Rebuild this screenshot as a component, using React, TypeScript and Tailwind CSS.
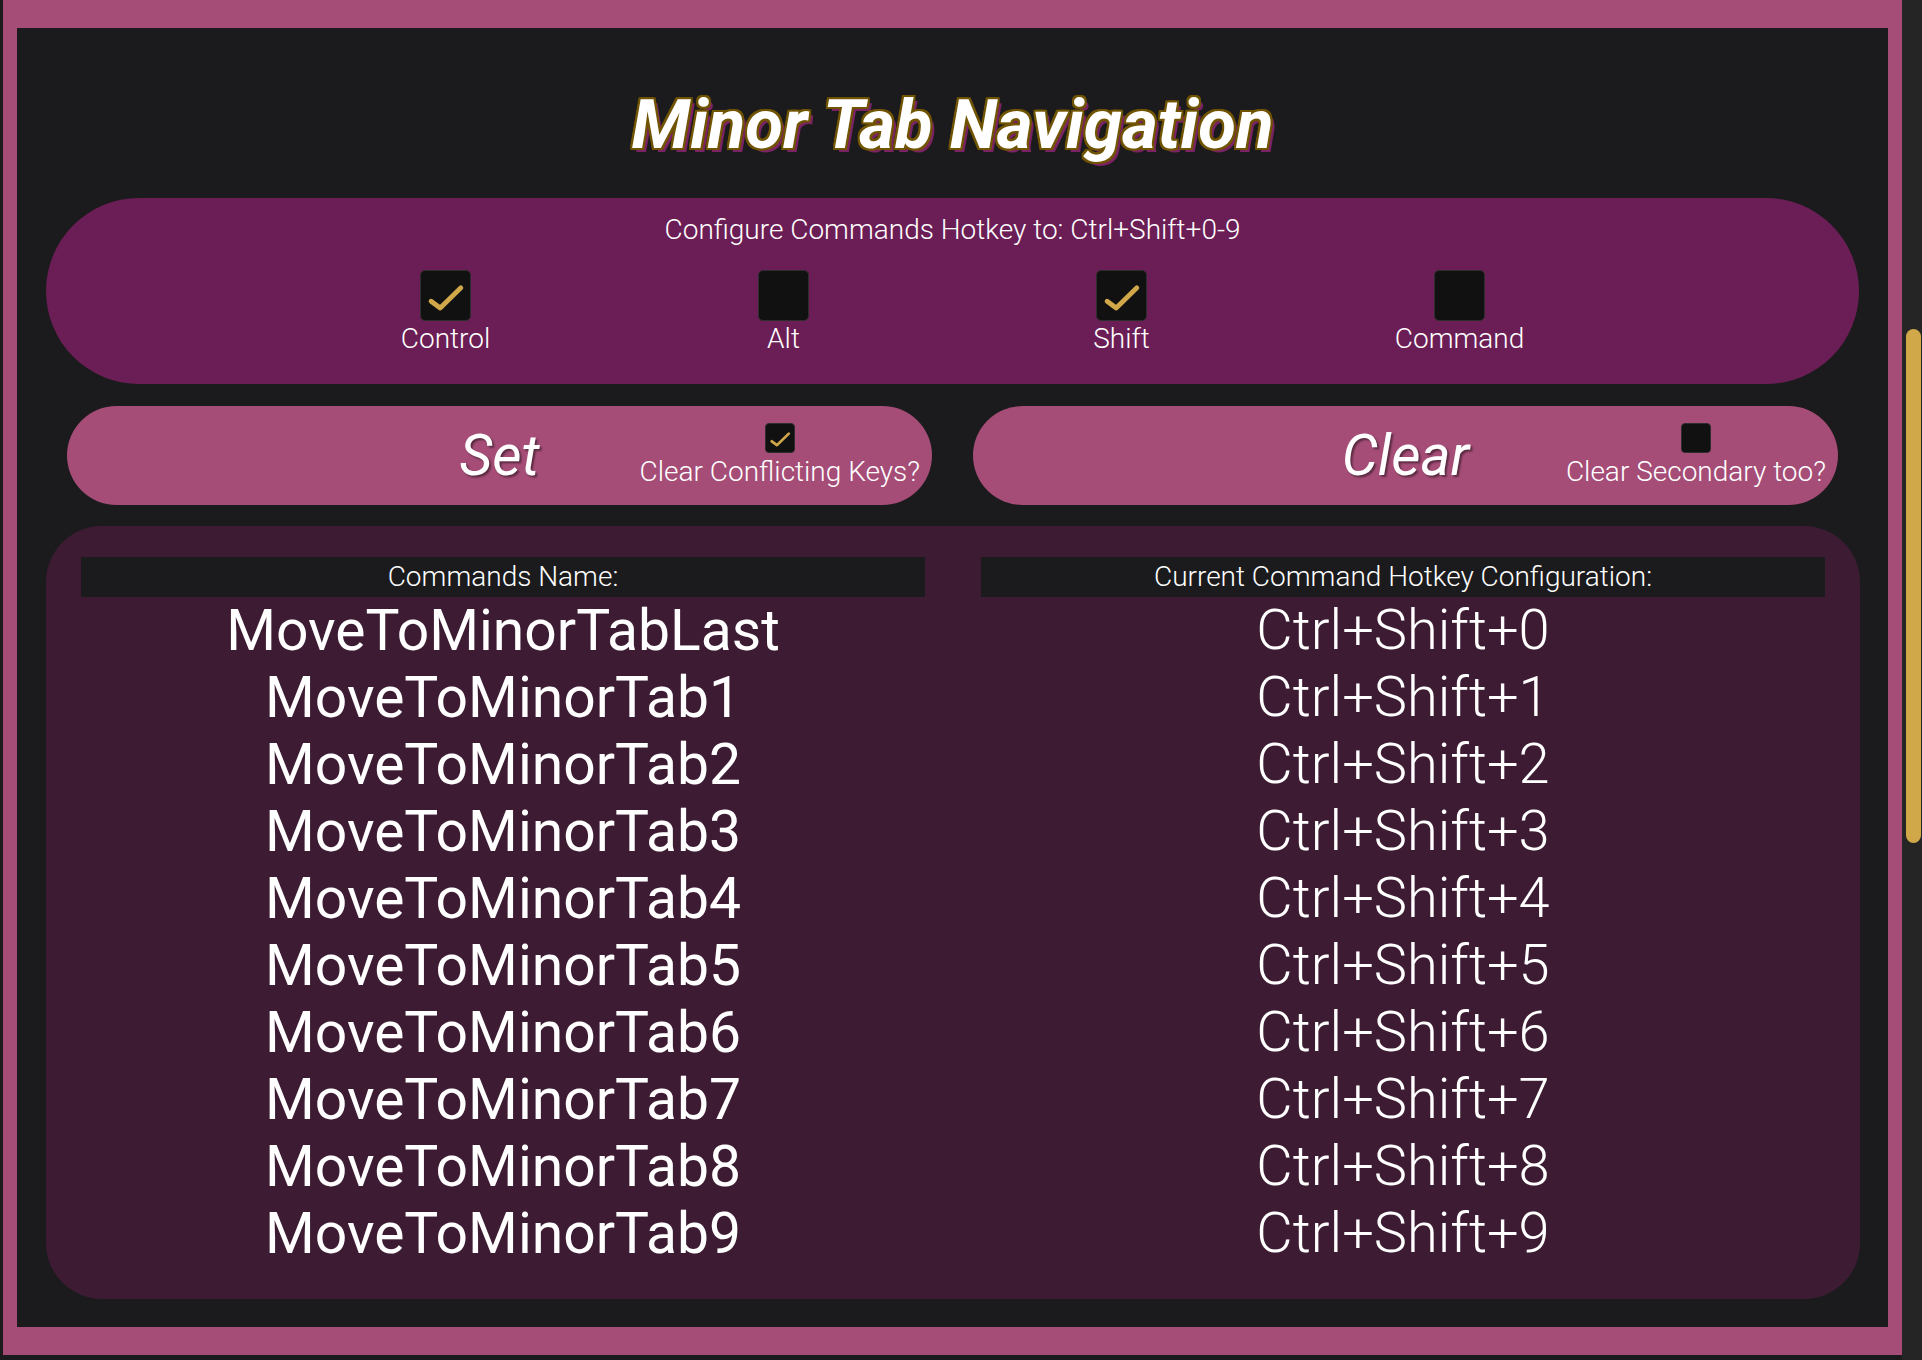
import React from 'react';

const hotkeyRows = [
  ['MoveToMinorTabLast', 'Ctrl+Shift+0'],
  ['MoveToMinorTab1', 'Ctrl+Shift+1'],
  ['MoveToMinorTab2', 'Ctrl+Shift+2'],
  ['MoveToMinorTab3', 'Ctrl+Shift+3'],
  ['MoveToMinorTab4', 'Ctrl+Shift+4'],
  ['MoveToMinorTab5', 'Ctrl+Shift+5'],
  ['MoveToMinorTab6', 'Ctrl+Shift+6'],
  ['MoveToMinorTab7', 'Ctrl+Shift+7'],
  ['MoveToMinorTab8', 'Ctrl+Shift+8'],
  ['MoveToMinorTab9', 'Ctrl+Shift+9'],
];

const modifiers = [
  { label: 'Control', checked: true },
  { label: 'Alt', checked: false },
  { label: 'Shift', checked: true },
  { label: 'Command', checked: false },
];

function CheckBox({ checked, small }: { checked: boolean; small?: boolean }) {
  return (
    <div
      className={
        small
          ? 'w-[30px] h-[30px] rounded-[4px] bg-[#111111] border border-[#2e2e2e] flex items-center justify-center'
          : 'w-[51px] h-[51px] rounded-[5px] bg-[#111111] border border-[#2e2e2e] flex items-center justify-center'
      }
    >
      {checked && (
        <svg viewBox="0 0 51 51" className="w-full h-full">
          <path
            d="M10.5 31.5 L20 38.5 L41.5 17.5"
            fill="none"
            stroke="#d0a84a"
            strokeWidth="5"
            strokeLinecap="round"
            strokeLinejoin="round"
          />
        </svg>
      )}
    </div>
  );
}

function ActionPill({ label, option, checked }: { label: string; option: string; checked: boolean }) {
  return (
    <div className="relative h-[99px] rounded-full bg-[#a54d77] flex items-center justify-center">
      <span className="text-[57px] italic text-white leading-none [text-shadow:2px_2px_2px_rgba(0,0,0,0.45)]">
        {label}
      </span>
      <div className="absolute right-[12px] top-[17px] flex flex-col items-center">
        <CheckBox checked={checked} small />
        <span className="mt-[2px] text-[28px] font-light leading-[33px] text-white">{option}</span>
      </div>
    </div>
  );
}

export default function App() {
  return (
    <div className="w-[1922px] h-[1360px] bg-[#1b1b1d] flex font-['Roboto',sans-serif] overflow-hidden">
      {/* Page frame */}
      <div className="ml-[3px] w-[1899px] h-[1355px] bg-[#a54d77] px-[14px] py-[28px]">
        <div className="h-full bg-[#1b1b1d] flex flex-col">
          {/* Title */}
          <h1 className="mt-[57px] text-center text-[69px] leading-[80px] font-bold italic text-white [text-shadow:2px_0_0_#705400,-2px_0_0_#705400,0_2px_0_#705400,0_-2px_0_#705400,2px_2px_0_#705400,-2px_-2px_0_#705400,2px_-2px_0_#705400,-2px_2px_0_#705400,4px_4px_0_#7b2264]">
            Minor Tab Navigation
          </h1>

          {/* Modifier selection */}
          <div className="mt-[33px] mx-[29px] h-[186px] rounded-full bg-[#6b1e55] flex flex-col items-center pt-[16px]">
            <p className="text-[28px] font-light leading-[32px] text-white">
              Configure Commands Hotkey to: Ctrl+Shift+0-9
            </p>
            <div className="mt-[24px] w-[1352px] grid grid-cols-4">
              {modifiers.map((m) => (
                <div key={m.label} className="flex flex-col items-center">
                  <CheckBox checked={m.checked} />
                  <span className="mt-[1px] text-[28px] font-light leading-[33px] text-white">{m.label}</span>
                </div>
              ))}
            </div>
          </div>

          {/* Set / Clear */}
          <div className="mt-[22px] px-[50px] grid grid-cols-2 gap-x-[41px]">
            <ActionPill label="Set" option="Clear Conflicting Keys?" checked />
            <ActionPill label="Clear" option="Clear Secondary too?" checked={false} />
          </div>

          {/* Commands table */}
          <div className="mt-[21px] ml-[29px] mr-[28px] rounded-[56px] bg-[#3d1c33] px-[35px] pt-[31px] pb-[32px]">
            <div className="grid grid-cols-2 gap-x-[56px]">
              <div className="h-[40px] bg-[#1b1b1d] text-center text-[28px] font-light leading-[40px] text-white">
                Commands Name:
              </div>
              <div className="h-[40px] bg-[#1b1b1d] text-center text-[28px] font-light leading-[40px] text-white">
                Current Command Hotkey Configuration:
              </div>
              {hotkeyRows.map(([name, key]) => (
                <React.Fragment key={name}>
                  <div className="text-center text-[57px] leading-[67px] text-white">{name}</div>
                  <div className="text-center text-[56px] font-light leading-[67px] text-white">{key}</div>
                </React.Fragment>
              ))}
            </div>
          </div>
        </div>
      </div>

      {/* Scrollbar */}
      <div className="w-[20px] h-full bg-[#252525] pt-[329px] pl-[4px]">
        <div className="w-[15px] h-[514px] rounded-full bg-[#d0a84a]" />
      </div>
    </div>
  );
}
